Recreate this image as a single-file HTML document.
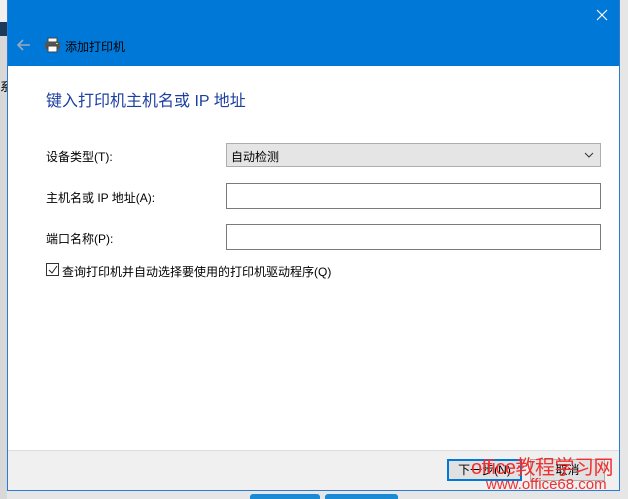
<!DOCTYPE html><html><head><meta charset="utf-8"><style>
body{margin:0;width:628px;height:499px;overflow:hidden;background:#e6e6e6;font-family:"Liberation Sans","Noto Sans CJK SC",sans-serif;position:relative}
.ab{position:absolute}
.dlg{left:7px;top:0;width:613px;height:491px;background:#fff;border:1px solid #2b7bd0;border-top:none;box-sizing:border-box}
.hd{left:0;top:0;width:611px;height:66px;background:#0078d7}
.lbl{font-size:12px;color:#000}
.box{height:24px;border:1px solid #7a7a7a;box-sizing:border-box;background:#fff}
</style></head><body>
<div class="ab" style="left:0;top:0;width:7px;height:499px;background:#d8d8d8"></div>
<div class="ab" style="left:0;top:0;width:7px;height:22px;background:#f0f0f0"></div>
<div class="ab" style="left:0;top:22px;width:7px;height:14px;background:#1e3a5a"></div>
<div class="ab" style="left:0;top:78px;font-size:12px">系</div>
<div class="ab" style="left:250px;top:494px;width:70px;height:5px;background:#1a8ad4;border-radius:3px 3px 0 0"></div>
<div class="ab" style="left:325px;top:494px;width:73px;height:5px;background:#1a8ad4;border-radius:3px 3px 0 0"></div>
<div class="ab dlg">
 <div class="ab hd">
  <svg class="ab" style="right:11px;top:9px" width="12" height="12"><path d="M1 1l10 10M11 1L1 11" stroke="#fff" stroke-width="1.2"/></svg>
 </div>
 <svg class="ab" style="left:8px;top:38px" width="16" height="14"><path d="M14 7H2M7 2L2 7l5 5" stroke="#9ab" stroke-width="1.6" fill="none"/></svg>
 <svg class="ab" style="left:36px;top:37px" width="17" height="16"><rect x="4" y="1" width="9" height="4" fill="#fff" stroke="#444"/><rect x="1" y="5" width="15" height="7" fill="#555"/><rect x="4" y="9" width="9" height="6" fill="#fff" stroke="#444"/><rect x="12" y="6" width="2" height="1" fill="#7f7"/></svg>
 <div class="ab" style="left:57px;top:38px;font-size:12px;color:#000">添加打印机</div>
 <div class="ab" style="left:38px;top:87px;font-size:16px;color:#1c3fa0">键入打印机主机名或 IP 地址</div>
 <div class="ab lbl" style="left:38px;top:148px">设备类型(T):</div>
 <div class="ab box" style="left:218px;top:143px;width:375px;background:#e5e5e5;border-color:#adadad"><span class="ab" style="left:4px;top:4px;font-size:12px">自动检测</span><svg class="ab" style="right:6px;top:8px" width="10" height="7"><path d="M1 1l4 4 4-4" stroke="#333" fill="none"/></svg></div>
 <div class="ab lbl" style="left:38px;top:189px">主机名或 IP 地址(A):</div>
 <div class="ab box" style="left:218px;top:183px;width:375px;height:26px"></div>
 <div class="ab lbl" style="left:38px;top:230px">端口名称(P):</div>
 <div class="ab box" style="left:218px;top:224px;width:375px;height:26px"></div>
 <div class="ab" style="left:38px;top:263px;width:13px;height:13px;border:1px solid #333;box-sizing:border-box"><svg class="ab" style="left:1px;top:1px" width="10" height="10"><path d="M1 5l3 3 5-7" stroke="#222" fill="none"/></svg></div>
 <div class="ab lbl" style="left:54px;top:263px">查询打印机并自动选择要使用的打印机驱动程序(Q)</div>
 <div class="ab" style="left:0;top:450px;width:611px;height:40px;background:#f0f0f0;border-top:1px solid #dcdcdc;box-sizing:border-box"></div>
 <div class="ab" style="left:439px;top:459px;width:75px;height:22px;border:2px solid #0078d7;background:#e1e1e1;box-sizing:border-box;font-size:12px;text-align:center;line-height:18px">下一步(N)</div>
 <div class="ab" style="left:522px;top:459px;width:75px;height:22px;border:1px solid #adadad;background:#e1e1e1;box-sizing:border-box;font-size:12px;text-align:center;line-height:20px">取消</div>
</div>
<div class="ab" style="left:471px;top:451px;font-size:20px;color:#f03030;white-space:nowrap;letter-spacing:-0.5px">office教程学习网</div>
<div class="ab" style="left:486px;top:476px;font-size:15px;color:#f03030">www.office68.com</div>
</body></html>
